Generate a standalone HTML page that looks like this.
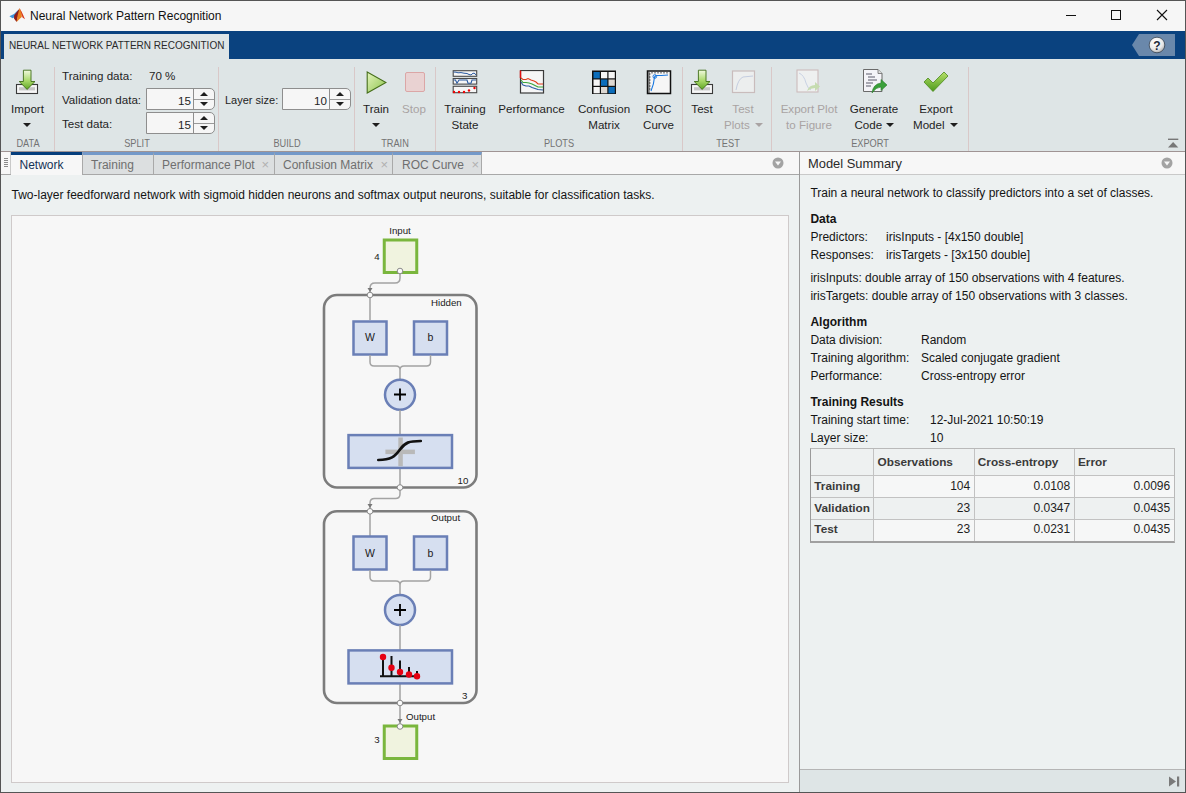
<!DOCTYPE html>
<html><head><meta charset="utf-8">
<style>
*{box-sizing:border-box;margin:0;padding:0}
html,body{width:1186px;height:793px;overflow:hidden;background:#f5f5f5;font-family:"Liberation Sans",sans-serif;position:relative}
div{position:absolute}
.t{line-height:1;white-space:nowrap;color:#1a1a1a}
.c{transform:translateX(-50%)}
#title{left:0;top:0;width:1186px;height:31px;background:#f6f6f6;}
#tabbar{left:0;top:31px;width:1186px;height:28px;background:#0a427f;}
#ttab{left:4px;top:3px;width:225px;height:25px;background:#dfe5e6;}
#strip{left:0;top:59px;width:1186px;height:93px;background:#dee5e6;}
.ts{font-size:11.6px;color:#1e1e1e}
.tg{font-size:11.6px;color:#a9a3a3}
.sec{font-size:10.6px;color:#737373;transform:translateX(-50%) scaleX(0.87)}
.vsep{top:8px;width:1px;height:84px;background:#d9c8c8}
.spin{width:69px;height:22px;background:#f6f6f6;border:1px solid #8e8e8e;border-radius:0 5px 5px 0}
.spin .dv{left:46px;top:0;width:1px;height:20px;background:#8e8e8e}
.spin .mid{left:47px;top:10px;width:20px;height:1px;background:#9a9a9a}
.spin .v{font-size:11.6px;color:#1e1e1e;right:23px;top:5.5px;line-height:1}
.up{width:0;height:0;border-left:4.5px solid transparent;border-right:4.5px solid transparent;border-bottom:4px solid #1e1e1e}
.dn{width:0;height:0;border-left:4.5px solid transparent;border-right:4.5px solid transparent;border-top:4px solid #1e1e1e}
.dd{width:0;height:0;border-left:4.5px solid transparent;border-right:4.5px solid transparent;border-top:4.5px solid #1e1e1e}
.ddg{width:0;height:0;border-left:4.5px solid transparent;border-right:4.5px solid transparent;border-top:4.5px solid #a9a3a3}
#doctabs{left:0;top:152px;width:799px;height:23px;background:#f7f7f7;border-bottom:1px solid #a8a8a8}
.dtab{top:0;height:22px;background:#dcdfe0;border-left:1px solid #a9a9a9;border-top:3px solid #7499c9}
.dtab .t{font-size:12px;color:#6f6f6f;top:3.5px}
.dtab .x{font-size:13px;color:#b0b0b0;top:3px;line-height:1}
#left{left:0;top:175px;width:799px;height:617px;background:#edf1f1}
#vdiv{left:799px;top:152px;width:1px;height:641px;background:#9a9a9a}
#right{left:800px;top:152px;width:386px;height:641px;background:#edf1f1}
#rhead{left:0;top:0;width:386px;height:23px;background:#f7f7f7;border-bottom:1px solid #c9c9c9}
.rs{font-size:12px;color:#141414}
.rb{font-size:12px;color:#141414;font-weight:bold}
#status{left:0;top:617px;width:386px;height:24px;background:#dee5e6;border-top:1px solid #b5b5b5}
table{position:absolute;border-collapse:collapse;font-size:12px;color:#1e1e1e;background:#f6f6f6}
td{border:1px solid #c9c9c9;padding:0 3px;height:22px;line-height:1}
#border{left:0;top:0;width:1186px;height:793px;border:1px solid #555}
</style></head><body>

<!-- title bar -->
<div id="title">
 <svg style="position:absolute;left:6px;top:4px" width="24" height="22" viewBox="0 0 24 22">
  <path d="M3.4 12.2 L8 10 L11.5 6.5 L13 7 L10.5 12.5 L6.5 14.2 Z" fill="#3d92da"/>
  <path d="M8.2 11.2 L12 6.5 L13.6 4.2 L13 10 L11.5 14 L10.6 18 L8 14.5 Z" fill="#8e1c1c"/>
  <path d="M13.6 4.2 L15.8 8.5 L15.8 13 L13.5 15 L10.6 18 L11.5 12 L12.5 8 Z" fill="#e9801f"/>
  <path d="M13.6 4.2 L16.5 9.5 L19 15.2 L16.5 13.5 L15.2 9 Z" fill="#d8371b"/>
 </svg>
 <div class="t" style="left:30px;top:10px;font-size:12px;color:#111">Neural Network Pattern Recognition</div>
 <div style="left:1066px;top:15px;width:10px;height:1px;background:#111"></div>
 <div style="left:1111px;top:10px;width:10px;height:10px;border:1px solid #111"></div>
 <svg style="position:absolute;left:1156px;top:9px" width="12" height="12" viewBox="0 0 12 12"><path d="M1 1 L11 11 M11 1 L1 11" stroke="#111" stroke-width="1.1"/></svg>
</div>

<!-- blue tab bar -->
<div id="tabbar">
 <div id="ttab"><div class="t" style="left:5px;top:7.2px;font-size:10px;color:#2a2a2a">NEURAL NETWORK PATTERN RECOGNITION</div></div>
 <svg style="position:absolute;left:1131px;top:3px" width="45" height="22" viewBox="0 0 45 22">
  <path d="M1 11 L8 0 L44 0 L44 22 L8 22 Z" fill="#6a88ab"/>
  <defs><radialGradient id="gh" cx="0.4" cy="0.3" r="0.8"><stop offset="0" stop-color="#ffffff"/><stop offset="0.6" stop-color="#e8e8e8"/><stop offset="1" stop-color="#9a9a9a"/></radialGradient></defs>
  <circle cx="26" cy="11" r="7.8" fill="url(#gh)" stroke="#2a3544" stroke-width="0.7"/>
  <text x="26" y="15.5" font-family="Liberation Sans" font-weight="bold" font-size="12" fill="#1c2838" text-anchor="middle">?</text>
 </svg>
</div>

<!-- toolstrip -->
<div id="strip">
 <!-- DATA -->
 <svg style="position:absolute;left:15px;top:10px" width="24" height="26" viewBox="0 0 24 26">
  <defs><linearGradient id="ga" x1="0" y1="0" x2="0" y2="1"><stop offset="0" stop-color="#f2f9e0"/><stop offset="0.55" stop-color="#a8d868"/><stop offset="1" stop-color="#5fa624"/></linearGradient></defs>
  <rect x="1.5" y="15.5" width="21" height="9" fill="#f6f6f6" stroke="#3a3a3a" stroke-width="1.1"/>
  <rect x="4" y="18.2" width="16" height="3.2" fill="#c6c6c6"/>
  <path d="M8.4 1.2 L16 1.2 L16 12.5 L20 12.5 L12.1 20.4 L4.2 12.5 L8.4 12.5 Z" fill="url(#ga)" stroke="#3f6e17" stroke-width="0.9"/>
 </svg>
 <div class="t ts c" style="left:27.5px;top:44px">Import</div>
 <div class="dd" style="left:23px;top:64px"></div>
 <div class="t sec" style="left:27.5px;top:79.2px">DATA</div>
 <div class="vsep" style="left:54px"></div>

 <!-- SPLIT -->
 <div class="t ts" style="left:62px;top:10.5px">Training data:</div>
 <div class="t ts" style="left:149px;top:10.5px">70 %</div>
 <div class="t ts" style="left:62px;top:35px">Validation data:</div>
 <div class="t ts" style="left:62px;top:58.5px">Test data:</div>
 <div class="spin" style="left:146px;top:29px"><div class="dv"></div><div class="mid"></div><div class="v">15</div><div class="up" style="left:53px;top:2.8px"></div><div class="dn" style="left:53px;top:12.7px"></div></div>
 <div class="spin" style="left:146px;top:53px"><div class="dv"></div><div class="mid"></div><div class="v">15</div><div class="up" style="left:53px;top:2.8px"></div><div class="dn" style="left:53px;top:12.7px"></div></div>
 <div class="t sec" style="left:137px;top:79.2px">SPLIT</div>
 <div class="vsep" style="left:218px"></div>

 <!-- BUILD -->
 <div class="t ts" style="left:225px;top:35.8px;font-size:11px">Layer size:</div>
 <div class="spin" style="left:282px;top:29px"><div class="dv"></div><div class="mid"></div><div class="v">10</div><div class="up" style="left:53px;top:2.8px"></div><div class="dn" style="left:53px;top:12.7px"></div></div>
 <div class="t sec" style="left:287px;top:79.2px">BUILD</div>
 <div class="vsep" style="left:354px"></div>

 <!-- TRAIN -->
 <svg style="position:absolute;left:366px;top:12px" width="21" height="23" viewBox="0 0 21 23">
  <defs><linearGradient id="gp" x1="0" y1="0" x2="1" y2="1"><stop offset="0" stop-color="#e4f4bc"/><stop offset="1" stop-color="#8cc44c"/></linearGradient></defs>
  <path d="M1.2 1 L20 11.5 L1.2 22 Z" fill="url(#gp)" stroke="#456e1a" stroke-width="1.1"/>
 </svg>
 <div class="t ts c" style="left:376px;top:44px">Train</div>
 <div class="dd" style="left:372px;top:64px"></div>
 <div style="left:405px;top:13px;width:20px;height:20px;background:#e9d2d2;border:1px solid #dba6a6;border-radius:2px"></div>
 <div class="t tg c" style="left:414px;top:44px">Stop</div>
 <div class="t sec" style="left:395px;top:79.2px">TRAIN</div>
 <div class="vsep" style="left:435px"></div>

 <!-- PLOTS -->
 <svg style="position:absolute;left:452px;top:11px" width="26" height="24" viewBox="0 0 26 24">
  <rect x="1.2" y="0.7" width="23.5" height="5.6" fill="#f6f6f6" stroke="#4a4a4a" stroke-width="1.1"/>
  <rect x="1.2" y="8.5" width="23.5" height="5.6" fill="#f6f6f6" stroke="#4a4a4a" stroke-width="1.1"/>
  <rect x="1.2" y="16.3" width="23.5" height="6.4" fill="#f6f6f6" stroke="#4a4a4a" stroke-width="1.1"/>
  <path d="M1.5 2 L4 2.2 L6 2.8 L9 2.6 L12 3.2 L15 3.5 L17 4.5 L19 5 L21 3.2 L23 3.5 L24 5.2" stroke="#2a5aa0" fill="none" stroke-width="1"/>
  <path d="M1.5 10 L3.5 10 L5 13.2 L7 10 L15 10 L16 13.2 L19 13.2 L20 10 L24 10" stroke="#2a5aa0" fill="none" stroke-width="1.1"/>
  <circle cx="2" cy="22" r="1.2" fill="#e00"/><circle cx="7" cy="22" r="1.2" fill="#e00"/><circle cx="12" cy="22" r="1.2" fill="#e00"/><circle cx="17" cy="20.5" r="1.2" fill="#e00"/><circle cx="22.5" cy="18" r="1.2" fill="#e00"/>
 </svg>
 <div class="t ts c" style="left:465px;top:44px">Training</div>
 <div class="t ts c" style="left:465px;top:59.5px">State</div>

 <svg style="position:absolute;left:519px;top:11px" width="26" height="24" viewBox="0 0 26 24">
  <rect x="1.5" y="0.5" width="23" height="22.5" fill="#f6f6f6" stroke="#3a3a3a" stroke-width="1.2"/>
  <path d="M1.5 0.5 L1.5 8" stroke="#e01010" stroke-width="1.5"/>
  <path d="M2 8 L4 9.5 L7 9.5 L9 8.5 L12 10 L15 11 L17 12 L19 14 L24 14" stroke="#e03a1a" fill="none" stroke-width="1.1"/>
  <path d="M2 10 L4 12.5 L7 12.5 L10 13 L13 14 L16 15.5 L19 17 L24 17" stroke="#3aa63a" fill="none" stroke-width="1.1"/>
  <path d="M2 12 L4 15 L7 16 L10 16 L13 17.5 L16 18.5 L19 19.5 L24 20" stroke="#2a5aa0" fill="none" stroke-width="1.1"/>
 </svg>
 <div class="t ts c" style="left:531.5px;top:44px">Performance</div>

 <svg style="position:absolute;left:591px;top:11px" width="26" height="25" viewBox="0 0 26 25">
  <rect x="1" y="0.5" width="24" height="23.5" fill="#111"/>
  <rect x="2.5" y="2" width="6.3" height="6.3" fill="#0b6dbb"/><rect x="10" y="2" width="6.3" height="6.3" fill="#f5f5f5"/><rect x="17.5" y="2" width="6.3" height="6.3" fill="#f5f5f5"/>
  <rect x="2.5" y="9.5" width="6.3" height="6.3" fill="#f5f5f5"/><rect x="10" y="9.5" width="6.3" height="6.3" fill="#0b6dbb"/><rect x="17.5" y="9.5" width="6.3" height="6.3" fill="#ddd8d2"/>
  <rect x="2.5" y="17" width="6.3" height="6.3" fill="#f5f5f5"/><rect x="10" y="17" width="6.3" height="6.3" fill="#ddd8d2"/><rect x="17.5" y="17" width="6.3" height="6.3" fill="#0b6dbb"/>
 </svg>
 <div class="t ts c" style="left:604px;top:44px">Confusion</div>
 <div class="t ts c" style="left:604px;top:59.5px">Matrix</div>

 <svg style="position:absolute;left:646px;top:11px" width="26" height="25" viewBox="0 0 26 25">
  <rect x="1.5" y="1" width="23" height="22.5" fill="#f6f6f6" stroke="#111" stroke-width="1.5"/>
  <path d="M3 2 L3 23 M3 4 L4.5 4 M3 7 L4.5 7 M3 10 L4.5 10 M3 13 L4.5 13 M3 16 L4.5 16 M3 19 L4.5 19 M6 2 L6 3.5 M9 2 L9 3.5 M12 2 L12 3.5 M15 2 L15 3.5 M18 2 L18 3.5 M21 2 L21 3.5" stroke="#111" stroke-width="0.8"/>
  <path d="M5 21 Q8 14 8.5 7 L10 5.5 Q15 5.5 22 5" stroke="#1a78e0" fill="none" stroke-width="1.1"/>
  <circle cx="8.8" cy="6.5" r="1.8" fill="none" stroke="#1a78e0" stroke-width="1"/>
 </svg>
 <div class="t ts c" style="left:658.5px;top:44px">ROC</div>
 <div class="t ts c" style="left:658.5px;top:59.5px">Curve</div>
 <div class="t sec" style="left:559px;top:79.2px">PLOTS</div>
 <div class="vsep" style="left:682px"></div>

 <!-- TEST -->
 <svg style="position:absolute;left:690px;top:10px" width="24" height="26" viewBox="0 0 24 26">
  <defs><linearGradient id="ga2" x1="0" y1="0" x2="0" y2="1"><stop offset="0" stop-color="#f2f9e0"/><stop offset="0.55" stop-color="#a8d868"/><stop offset="1" stop-color="#5fa624"/></linearGradient></defs>
  <rect x="1.5" y="15.5" width="21" height="9" fill="#f6f6f6" stroke="#3a3a3a" stroke-width="1.1"/>
  <rect x="4" y="18.2" width="16" height="3.2" fill="#c6c6c6"/>
  <path d="M8.4 1.2 L16 1.2 L16 12.5 L20 12.5 L12.1 20.4 L4.2 12.5 L8.4 12.5 Z" fill="url(#ga2)" stroke="#3f6e17" stroke-width="0.9"/>
 </svg>
 <div class="t ts c" style="left:702px;top:44px">Test</div>
 <svg style="position:absolute;left:731px;top:11px" width="25" height="24" viewBox="0 0 25 24">
  <rect x="1.5" y="1" width="22" height="21.5" fill="#eceeee" stroke="#c9bcbc" stroke-width="1.2"/>
  <path d="M5 20 Q7 9 12 7 L22 6" stroke="#c4cde0" fill="none" stroke-width="1"/>
 </svg>
 <div class="t tg c" style="left:743px;top:44px">Test</div>
 <div class="t tg" style="left:724px;top:59.5px">Plots</div>
 <div class="ddg" style="left:755px;top:64px"></div>
 <div class="t sec" style="left:727.5px;top:79.2px">TEST</div>
 <div class="vsep" style="left:771px"></div>

 <!-- EXPORT -->
 <svg style="position:absolute;left:796px;top:10px" width="26" height="25" viewBox="0 0 26 25">
  <rect x="1" y="1" width="21" height="22" fill="#eef0f0" stroke="#cdbcbc" stroke-width="1.1"/>
  <path d="M3 4 Q8 6 10 14 Q12 20 15 21" stroke="#c9d2e4" fill="none"/>
  <path d="M11 22 Q13 16 19 16 L19 13 L24 17.5 L19 22 L19 19 Q15 19 11 22Z" fill="#c6dcb0"/>
 </svg>
 <div class="t tg c" style="left:809px;top:44px">Export Plot</div>
 <div class="t tg c" style="left:809px;top:59.5px">to Figure</div>

 <svg style="position:absolute;left:862px;top:9px" width="27" height="27" viewBox="0 0 27 27">
  <path d="M1.5 1.5 L16 1.5 L20 5.5 L20 23.5 L1.5 23.5 Z" fill="#f4f4f8" stroke="#6a6a6a" stroke-width="1"/>
  <path d="M16 1.5 L16 5.5 L20 5.5" fill="#dcdcdc" stroke="#6a6a6a" stroke-width="0.8"/>
  <path d="M4 6 L10 6 M6 9 L13 9 M6 12 L15 12 M4 15 L11 15 M4 18 L9 18" stroke="#5a5a6a" stroke-width="1.2"/>
  <path d="M10 25 Q11 16 19 15 L19 11.5 L25 17 L19 22.5 L19 19 Q14 19 10 25Z" fill="#3aa03a" stroke="#2a7a2a" stroke-width="0.6"/>
 </svg>
 <div class="t ts c" style="left:874px;top:44px">Generate</div>
 <div class="t ts" style="left:854.5px;top:59.5px">Code</div>
 <div class="dd" style="left:886px;top:64px"></div>

 <svg style="position:absolute;left:923px;top:12px" width="26" height="22" viewBox="0 0 26 22">
  <defs><linearGradient id="gc" x1="0" y1="0" x2="0" y2="1"><stop offset="0" stop-color="#b7e06a"/><stop offset="1" stop-color="#4c9a1c"/></linearGradient></defs>
  <path d="M1 11 L5 7 L10 12 L21 1 L25 5 L10 20.5 Z" fill="url(#gc)" stroke="#4a8a1a" stroke-width="0.8"/>
 </svg>
 <div class="t ts c" style="left:936px;top:44px">Export</div>
 <div class="t ts" style="left:913px;top:59.5px">Model</div>
 <div class="dd" style="left:950px;top:64px"></div>
 <div class="t sec" style="left:870px;top:79.2px">EXPORT</div>
 <div class="vsep" style="left:968px"></div>

 <svg style="position:absolute;left:1167px;top:79px" width="12" height="11" viewBox="0 0 12 11">
  <rect x="1" y="0.6" width="10.3" height="1.4" fill="#777"/>
  <path d="M1 9.6 L6.15 4 L11.3 9.6 Z" fill="#777"/>
 </svg>
 <div style="left:0;top:92px;width:1186px;height:1px;background:#a09494"></div>
</div>

<!-- doc tabs -->
<div id="doctabs">
 <div style="left:1px;top:0;width:10px;height:22px;background:#f7f7f7;border-right:1px solid #c9c9c9"></div>
 <div style="left:4px;top:6px;width:4px;height:1px;background:#8a8a8a"></div>
 <div style="left:4px;top:8px;width:4px;height:1px;background:#8a8a8a"></div>
 <div style="left:4px;top:10px;width:4px;height:1px;background:#8a8a8a"></div>
 <div style="left:4px;top:12px;width:4px;height:1px;background:#8a8a8a"></div>
 <div style="left:4px;top:14px;width:4px;height:1px;background:#8a8a8a"></div>
 <div style="left:11px;top:0;width:71px;height:23px;background:#f7f7f7;border-top:3px solid #063e7c"></div>
 <div class="t" style="left:19.5px;top:6.5px;font-size:12px;color:#153256">Network</div>
 <div class="dtab" style="left:82px;width:71px"><div class="t" style="left:8px">Training</div></div>
 <div class="dtab" style="left:153px;width:121px"><div class="t" style="left:8px">Performance Plot</div><div class="x" style="left:107.5px">×</div></div>
 <div class="dtab" style="left:274px;width:118px"><div class="t" style="left:8px">Confusion Matrix</div><div class="x" style="left:105.5px">×</div></div>
 <div class="dtab" style="left:392px;width:90px;border-right:1px solid #a9a9a9"><div class="t" style="left:9px">ROC Curve</div><div class="x" style="left:78.5px">×</div></div>
 <svg style="position:absolute;left:772px;top:5px" width="12" height="12" viewBox="0 0 12 12"><circle cx="6" cy="6" r="5.5" fill="#a3a3a3"/><path d="M3 4.5 L9 4.5 L6 8.5 Z" fill="#f7f7f7"/></svg>
</div>

<!-- left panel -->
<div id="left">
 <div class="t" style="left:11.5px;top:14px;font-size:12px;color:#141414">Two-layer feedforward network with sigmoid hidden neurons and softmax output neurons, suitable for classification tasks.</div>
 <div style="left:11px;top:40px;width:778px;height:568px;background:#f7f7f7;border:1px solid #cfcaca"></div>
</div>

<!-- diagram -->
<svg style="position:absolute;left:0;top:0" width="800" height="793" viewBox="0 0 800 793">
 <g font-family="Liberation Sans" font-size="9.7" fill="#1a1a1a">
  <!-- input -->
  <text x="400" y="234" text-anchor="middle">Input</text>
  <text x="377" y="260" text-anchor="middle">4</text>
  <rect x="384.25" y="240" width="32.5" height="32.5" fill="#f0f3df" stroke="#7ab63d" stroke-width="3"/>
  <!-- connector input -> hidden -->
  <path d="M400 273 L400 278 Q400 283 395 283 L375 283 Q370 283 370 288 L370 320" fill="none" stroke="#a3a3a3" stroke-width="1.5"/>
  <path d="M367.5 288 L370 292 L372.5 288 Z" fill="#777"/>
  <!-- hidden box -->
  <rect x="324" y="295" width="152.5" height="192.5" rx="13" ry="13" fill="none" stroke="#7c7c7c" stroke-width="2.6"/>
  <text x="431" y="306">Hidden</text>
  <text x="457.5" y="484">10</text>
  <rect x="353.5" y="321.5" width="33" height="33" fill="#d6dff0" stroke="#6a7fb6" stroke-width="2.5"/>
  <rect x="414" y="321.5" width="33" height="33" fill="#d6dff0" stroke="#6a7fb6" stroke-width="2.5"/>
  <text x="370" y="341" text-anchor="middle" font-size="10.5">W</text>
  <text x="430.5" y="341" text-anchor="middle" font-size="10.5">b</text>
  <path d="M370 355 L370 362 Q370 366 374 366 L396 366 Q400 366 400 370 L400 379 M430.5 355 L430.5 362 Q430.5 366 426.5 366 L404 366 Q400 366 400 370" fill="none" stroke="#a3a3a3" stroke-width="1.5"/>
  <circle cx="400" cy="394.8" r="15" fill="#d7e0f1" stroke="#6a7fb6" stroke-width="2.5"/>
  <path d="M394 394.5 L406 394.5 M400 388.5 L400 400.5" stroke="#000" stroke-width="1.8"/>
  <path d="M400 410 L400 434.5 M400 468 L400 487" stroke="#a3a3a3" stroke-width="1.5"/>
  <rect x="348.5" y="435.1" width="103.5" height="32.8" fill="#d6dff0" stroke="#6a7fb6" stroke-width="2.5"/>
  <rect x="398.3" y="437.5" width="4.5" height="28.7" fill="#b9b9b9"/>
  <rect x="385.4" y="449.6" width="29.5" height="4.5" fill="#b9b9b9"/>
  <path d="M378.3 460 C391 460 395 456.5 400 449.5 C405 442.5 409 441 420.8 441" fill="none" stroke="#111" stroke-width="2.7" stroke-linecap="round"/>
  <circle cx="370" cy="295" r="2.8" fill="#fafafa" stroke="#8a8a8a" stroke-width="1"/>
  <circle cx="400" cy="271" r="2.8" fill="#fafafa" stroke="#8a8a8a" stroke-width="1"/>
  <!-- connector hidden -> output -->
  <path d="M400 488 L400 494 Q400 498.5 395.5 498.5 L374.5 498.5 Q370 498.5 370 503 L370 536" fill="none" stroke="#a3a3a3" stroke-width="1.5"/>
  <path d="M367.5 504 L370 508 L372.5 504 Z" fill="#777"/>
  <circle cx="400" cy="487.5" r="2.8" fill="#fafafa" stroke="#8a8a8a" stroke-width="1"/>
  <!-- output box -->
  <rect x="324" y="511.3" width="152.5" height="191.7" rx="13" ry="13" fill="none" stroke="#7c7c7c" stroke-width="2.6"/>
  <text x="431" y="521">Output</text>
  <text x="462" y="699">3</text>
  <rect x="353.5" y="536.5" width="33" height="33" fill="#d6dff0" stroke="#6a7fb6" stroke-width="2.5"/>
  <rect x="414" y="536.5" width="33" height="33" fill="#d6dff0" stroke="#6a7fb6" stroke-width="2.5"/>
  <text x="370" y="556.5" text-anchor="middle" font-size="10.5">W</text>
  <text x="430.5" y="556.5" text-anchor="middle" font-size="10.5">b</text>
  <path d="M370 570 L370 577 Q370 581 374 581 L396 581 Q400 581 400 585 L400 594 M430.5 570 L430.5 577 Q430.5 581 426.5 581 L404 581 Q400 581 400 585" fill="none" stroke="#a3a3a3" stroke-width="1.5"/>
  <circle cx="400" cy="610" r="15" fill="#d7e0f1" stroke="#6a7fb6" stroke-width="2.5"/>
  <path d="M394 610 L406 610 M400 604 L400 616" stroke="#000" stroke-width="1.8"/>
  <path d="M400 625 L400 650 M400 684 L400 724" stroke="#a3a3a3" stroke-width="1.5"/>
  <rect x="348.5" y="650.4" width="103.5" height="33" fill="#d6dff0" stroke="#6a7fb6" stroke-width="2.5"/>
  <path d="M380 676.3 L419 676.3 M383 657 L383 676 M391.5 656 L391.5 676 M400 660.5 L400 676 M409 667 L409 676 M417 671 L417 676" stroke="#111" stroke-width="2"/>
  <g fill="#e60012"><circle cx="383" cy="657" r="3.2"/><circle cx="391.5" cy="667.7" r="3.2"/><circle cx="400" cy="672" r="3.2"/><circle cx="409" cy="674.5" r="3.2"/><circle cx="417" cy="676.3" r="3.2"/></g>
  <circle cx="370" cy="511.3" r="2.8" fill="#fafafa" stroke="#8a8a8a" stroke-width="1"/>
  <circle cx="400" cy="703" r="2.8" fill="#fafafa" stroke="#8a8a8a" stroke-width="1"/>
  <path d="M397.5 719 L400 723 L402.5 719 Z" fill="#777"/>
  <text x="406" y="719.5">Output</text>
  <text x="377" y="743" text-anchor="middle">3</text>
  <rect x="384.25" y="726" width="32.5" height="32.5" fill="#f0f3df" stroke="#7ab63d" stroke-width="3"/>
  <circle cx="400" cy="726.5" r="2.8" fill="#fafafa" stroke="#8a8a8a" stroke-width="1"/>
 </g>
</svg>

<div id="vdiv"></div>

<!-- right panel -->
<div id="right">
 <div id="rhead">
  <div class="t" style="left:8px;top:5.5px;font-size:12.9px;color:#2a2a2a">Model Summary</div>
  <svg style="position:absolute;left:361px;top:5px" width="12" height="12" viewBox="0 0 12 12"><circle cx="6" cy="6" r="5.5" fill="#a3a3a3"/><path d="M3 4.5 L9 4.5 L6 8.5 Z" fill="#f7f7f7"/></svg>
 </div>
 <div class="t rs" style="left:10.4px;top:34.5px">Train a neural network to classify predictors into a set of classes.</div>
 <div class="t rb" style="left:10.4px;top:60.5px">Data</div>
 <div class="t rs" style="left:10.4px;top:78.7px">Predictors:</div>
 <div class="t rs" style="left:86px;top:78.7px">irisInputs - [4x150 double]</div>
 <div class="t rs" style="left:10.4px;top:97px">Responses:</div>
 <div class="t rs" style="left:86px;top:97px">irisTargets - [3x150 double]</div>
 <div class="t rs" style="left:10.4px;top:119.7px">irisInputs: double array of 150 observations with 4 features.</div>
 <div class="t rs" style="left:10.4px;top:138px">irisTargets: double array of 150 observations with 3 classes.</div>
 <div class="t rb" style="left:10.4px;top:164px">Algorithm</div>
 <div class="t rs" style="left:10.4px;top:182px">Data division:</div>
 <div class="t rs" style="left:121px;top:182px">Random</div>
 <div class="t rs" style="left:10.4px;top:200px">Training algorithm:</div>
 <div class="t rs" style="left:121px;top:200px">Scaled conjugate gradient</div>
 <div class="t rs" style="left:10.4px;top:218px">Performance:</div>
 <div class="t rs" style="left:121px;top:218px">Cross-entropy error</div>
 <div class="t rb" style="left:10.4px;top:244px">Training Results</div>
 <div class="t rs" style="left:10.4px;top:262px">Training start time:</div>
 <div class="t rs" style="left:130px;top:262px">12-Jul-2021 10:50:19</div>
 <div class="t rs" style="left:10.4px;top:280px">Layer size:</div>
 <div class="t rs" style="left:130px;top:280px">10</div>
 <div style="left:10.5px;top:296.5px;width:364.0px;height:93.0px;background:#f6f7f7"></div>
 <div style="left:10.5px;top:296.5px;width:364.0px;height:27.0px;background:#eef1f1"></div>
 <div style="left:10.5px;top:296.5px;width:63.0px;height:93.0px;background:#eef1f1"></div>
 <div style="left:73.5px;top:345.5px;width:301.0px;height:22.0px;background:#eef1f1"></div>
 <div style="left:73.0px;top:296.5px;width:1px;height:93.0px;background:#c2c2c2"></div>
 <div style="left:174.0px;top:296.5px;width:1px;height:93.0px;background:#c2c2c2"></div>
 <div style="left:274.0px;top:296.5px;width:1px;height:93.0px;background:#c2c2c2"></div>
 <div style="left:10.5px;top:323.0px;width:364.0px;height:1px;background:#c2c2c2"></div>
 <div style="left:10.5px;top:345.0px;width:364.0px;height:1px;background:#c2c2c2"></div>
 <div style="left:10.5px;top:367.0px;width:364.0px;height:1px;background:#c2c2c2"></div>
 <div style="left:10.0px;top:296.0px;width:365.0px;height:94.5px;border:1px solid #b9b9b9;border-left:1.5px solid #9a9a9a;border-bottom:2px solid #a0a0a0"></div>
 <div class="t rs" style="left:77.5px;top:305.3px;font-weight:bold;color:#3a3a3a;font-size:11.8px;">Observations</div>
 <div class="t rs" style="left:177.8px;top:305.3px;font-weight:bold;color:#3a3a3a;font-size:11.8px;">Cross-entropy</div>
 <div class="t rs" style="left:278px;top:305.3px;font-weight:bold;color:#3a3a3a;font-size:11.8px;">Error</div>
 <div class="t rs" style="left:14.3px;top:328.6px;font-weight:bold;color:#3a3a3a;font-size:11.8px;">Training</div>
 <div class="t rs" style="right:215.8px;top:327.6px;color:#1e1e1e;">104</div>
 <div class="t rs" style="right:115.8px;top:327.6px;color:#1e1e1e;">0.0108</div>
 <div class="t rs" style="right:15.8px;top:327.6px;color:#1e1e1e;">0.0096</div>
 <div class="t rs" style="left:14.3px;top:350.6px;font-weight:bold;color:#3a3a3a;font-size:11.8px;">Validation</div>
 <div class="t rs" style="right:215.8px;top:349.6px;color:#1e1e1e;">23</div>
 <div class="t rs" style="right:115.8px;top:349.6px;color:#1e1e1e;">0.0347</div>
 <div class="t rs" style="right:15.8px;top:349.6px;color:#1e1e1e;">0.0435</div>
 <div class="t rs" style="left:14.3px;top:372.3px;font-weight:bold;color:#3a3a3a;font-size:11.8px;">Test</div>
 <div class="t rs" style="right:215.8px;top:371.3px;color:#1e1e1e;">23</div>
 <div class="t rs" style="right:115.8px;top:371.3px;color:#1e1e1e;">0.0231</div>
 <div class="t rs" style="right:15.8px;top:371.3px;color:#1e1e1e;">0.0435</div>
 <div id="status">
  <svg style="position:absolute;left:368px;top:6px" width="12" height="11" viewBox="0 0 12 11"><path d="M1 0.5 L8 5.5 L1 10.5 Z" fill="#7a7a7a"/><rect x="9" y="0.5" width="2.2" height="10" fill="#7a7a7a"/></svg>
 </div>
</div>

<div id="border"></div>
</body></html>
